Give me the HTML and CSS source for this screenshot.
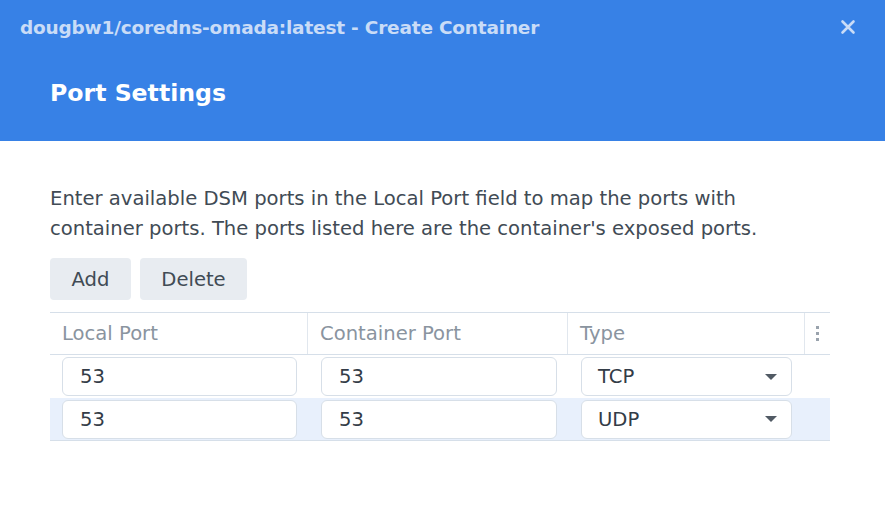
FILE: index.html
```html
<!DOCTYPE html>
<html>
<head>
<meta charset="utf-8">
<link rel="stylesheet" href="styles.css">
</head>
<body>
<div class="dialog">
  <header class="header">
    <div class="titlebar">
      <span class="title">dougbw1/coredns-omada:latest - Create Container</span>
      <span class="close" aria-label="close">
        <svg width="16" height="16" viewBox="0 0 16 16"><path d="M2.5 2.5 L13.5 13.5 M13.5 2.5 L2.5 13.5" stroke="#c9dcf7" stroke-width="2.6" stroke-linecap="round"/></svg>
      </span>
    </div>
    <h1 class="step">Port Settings</h1>
  </header>
  <main class="body">
    <p class="desc">Enter available DSM ports in the Local Port field to map the ports with container ports. The ports listed here are the container's exposed ports.</p>
    <div class="toolbar">
      <button class="btn btn-add">Add</button>
      <button class="btn btn-del">Delete</button>
    </div>
    <div class="table">
      <div class="row head">
        <div class="cell c1">Local Port</div>
        <div class="cell c2">Container Port</div>
        <div class="cell c3">Type</div>
        <div class="cell c4"><span class="dots"><i></i><i></i><i></i></span></div>
      </div>
      <div class="row">
        <div class="cell c1"><div class="input">53</div></div>
        <div class="cell c2"><div class="input">53</div></div>
        <div class="cell c3"><div class="input select">TCP<span class="caret"></span></div></div>
        <div class="cell c4"></div>
      </div>
      <div class="row sel">
        <div class="cell c1"><div class="input">53</div></div>
        <div class="cell c2"><div class="input">53</div></div>
        <div class="cell c3"><div class="input select">UDP<span class="caret"></span></div></div>
        <div class="cell c4"></div>
      </div>
    </div>
  </main>
</div>
</body>
</html>
```
FILE: styles.css
```css
* { box-sizing: border-box; }
html, body { margin: 0; padding: 0; }
body {
  width: 885px;
  height: 519px;
  background: #fff;
  font-family: "DejaVu Sans", Verdana, sans-serif;
  overflow: hidden;
}
.dialog { width: 885px; height: 519px; background: #fff; }
.header {
  background: #3781e6;
  height: 141px;
  padding: 0;
}
.titlebar {
  display: flex;
  align-items: center;
  justify-content: space-between;
  height: 54px;
  padding: 0 29px 0 20px;
}
.title {
  color: #c9dcf7;
  font-weight: bold;
  font-size: 18.5px;
  letter-spacing: -0.2px;
}
.close { display: flex; width: 16px; height: 16px; }
.step {
  margin: 0;
  padding: 24px 0 0 50px;
  color: #fff;
  font-size: 23.6px;
  font-weight: bold;
  line-height: 30px;
}
.body { padding: 43px 40px 0 50px; }
.desc {
  margin: 0;
  max-width: 715px;
  font-size: 19.6px;
  line-height: 30px;
  color: #414b55;
}
.toolbar { display: flex; gap: 9px; margin-top: 14px; }
.btn {
  height: 42px;
  border: none;
  border-radius: 4px;
  background: #e8ecf1;
  color: #414b55;
  font-family: inherit;
  font-size: 19.6px;
  padding: 0;
}
.btn-add { width: 81px; }
.btn-del { width: 107px; }
.table { margin-top: 12px; width: 780px; border-top: 1px solid #d6dfe9; }
.row {
  display: grid;
  grid-template-columns: 258px 260px 237px 25px;
  height: 43px;
  align-items: center;
}
.row.sel { background: #e8f0fc; border-bottom: 1px solid #d6dfe9; }
.row.head { height: 42px; border-bottom: 1px solid #d6dfe9; }
.head .cell {
  height: 100%;
  display: flex;
  align-items: center;
  padding-left: 12px;
  color: #8a949f;
  font-size: 19.6px;
  border-right: 1px solid #e1e7ee;
}
.head .cell.c4 { border-right: none; justify-content: center; padding-left: 0; }
.row .cell.c1 { padding-left: 12px; }
.row:not(.head) .cell { padding-right: 11px; }
.row:not(.head) .cell.c2 { padding-left: 13px; }
.row:not(.head) .cell.c3 { padding-left: 13px; padding-right: 13px; }
.input {
  height: 39px;
  border: 1px solid #d7dfe8;
  border-radius: 6px;
  background: #fff;
  display: flex;
  align-items: center;
  padding-left: 17px;
  font-size: 19.6px;
  color: #333c47;
  position: relative;
}
.select { padding-left: 16px; }
.caret {
  position: absolute;
  right: 14px;
  top: 50%;
  margin-top: -3px;
  width: 0; height: 0;
  border-left: 6px solid transparent;
  border-right: 6px solid transparent;
  border-top: 6px solid #515a64;
}
.dots { display: flex; flex-direction: column; gap: 3px; }
.dots i { display: block; width: 3px; height: 3px; background: #9aa3ad; }
```
